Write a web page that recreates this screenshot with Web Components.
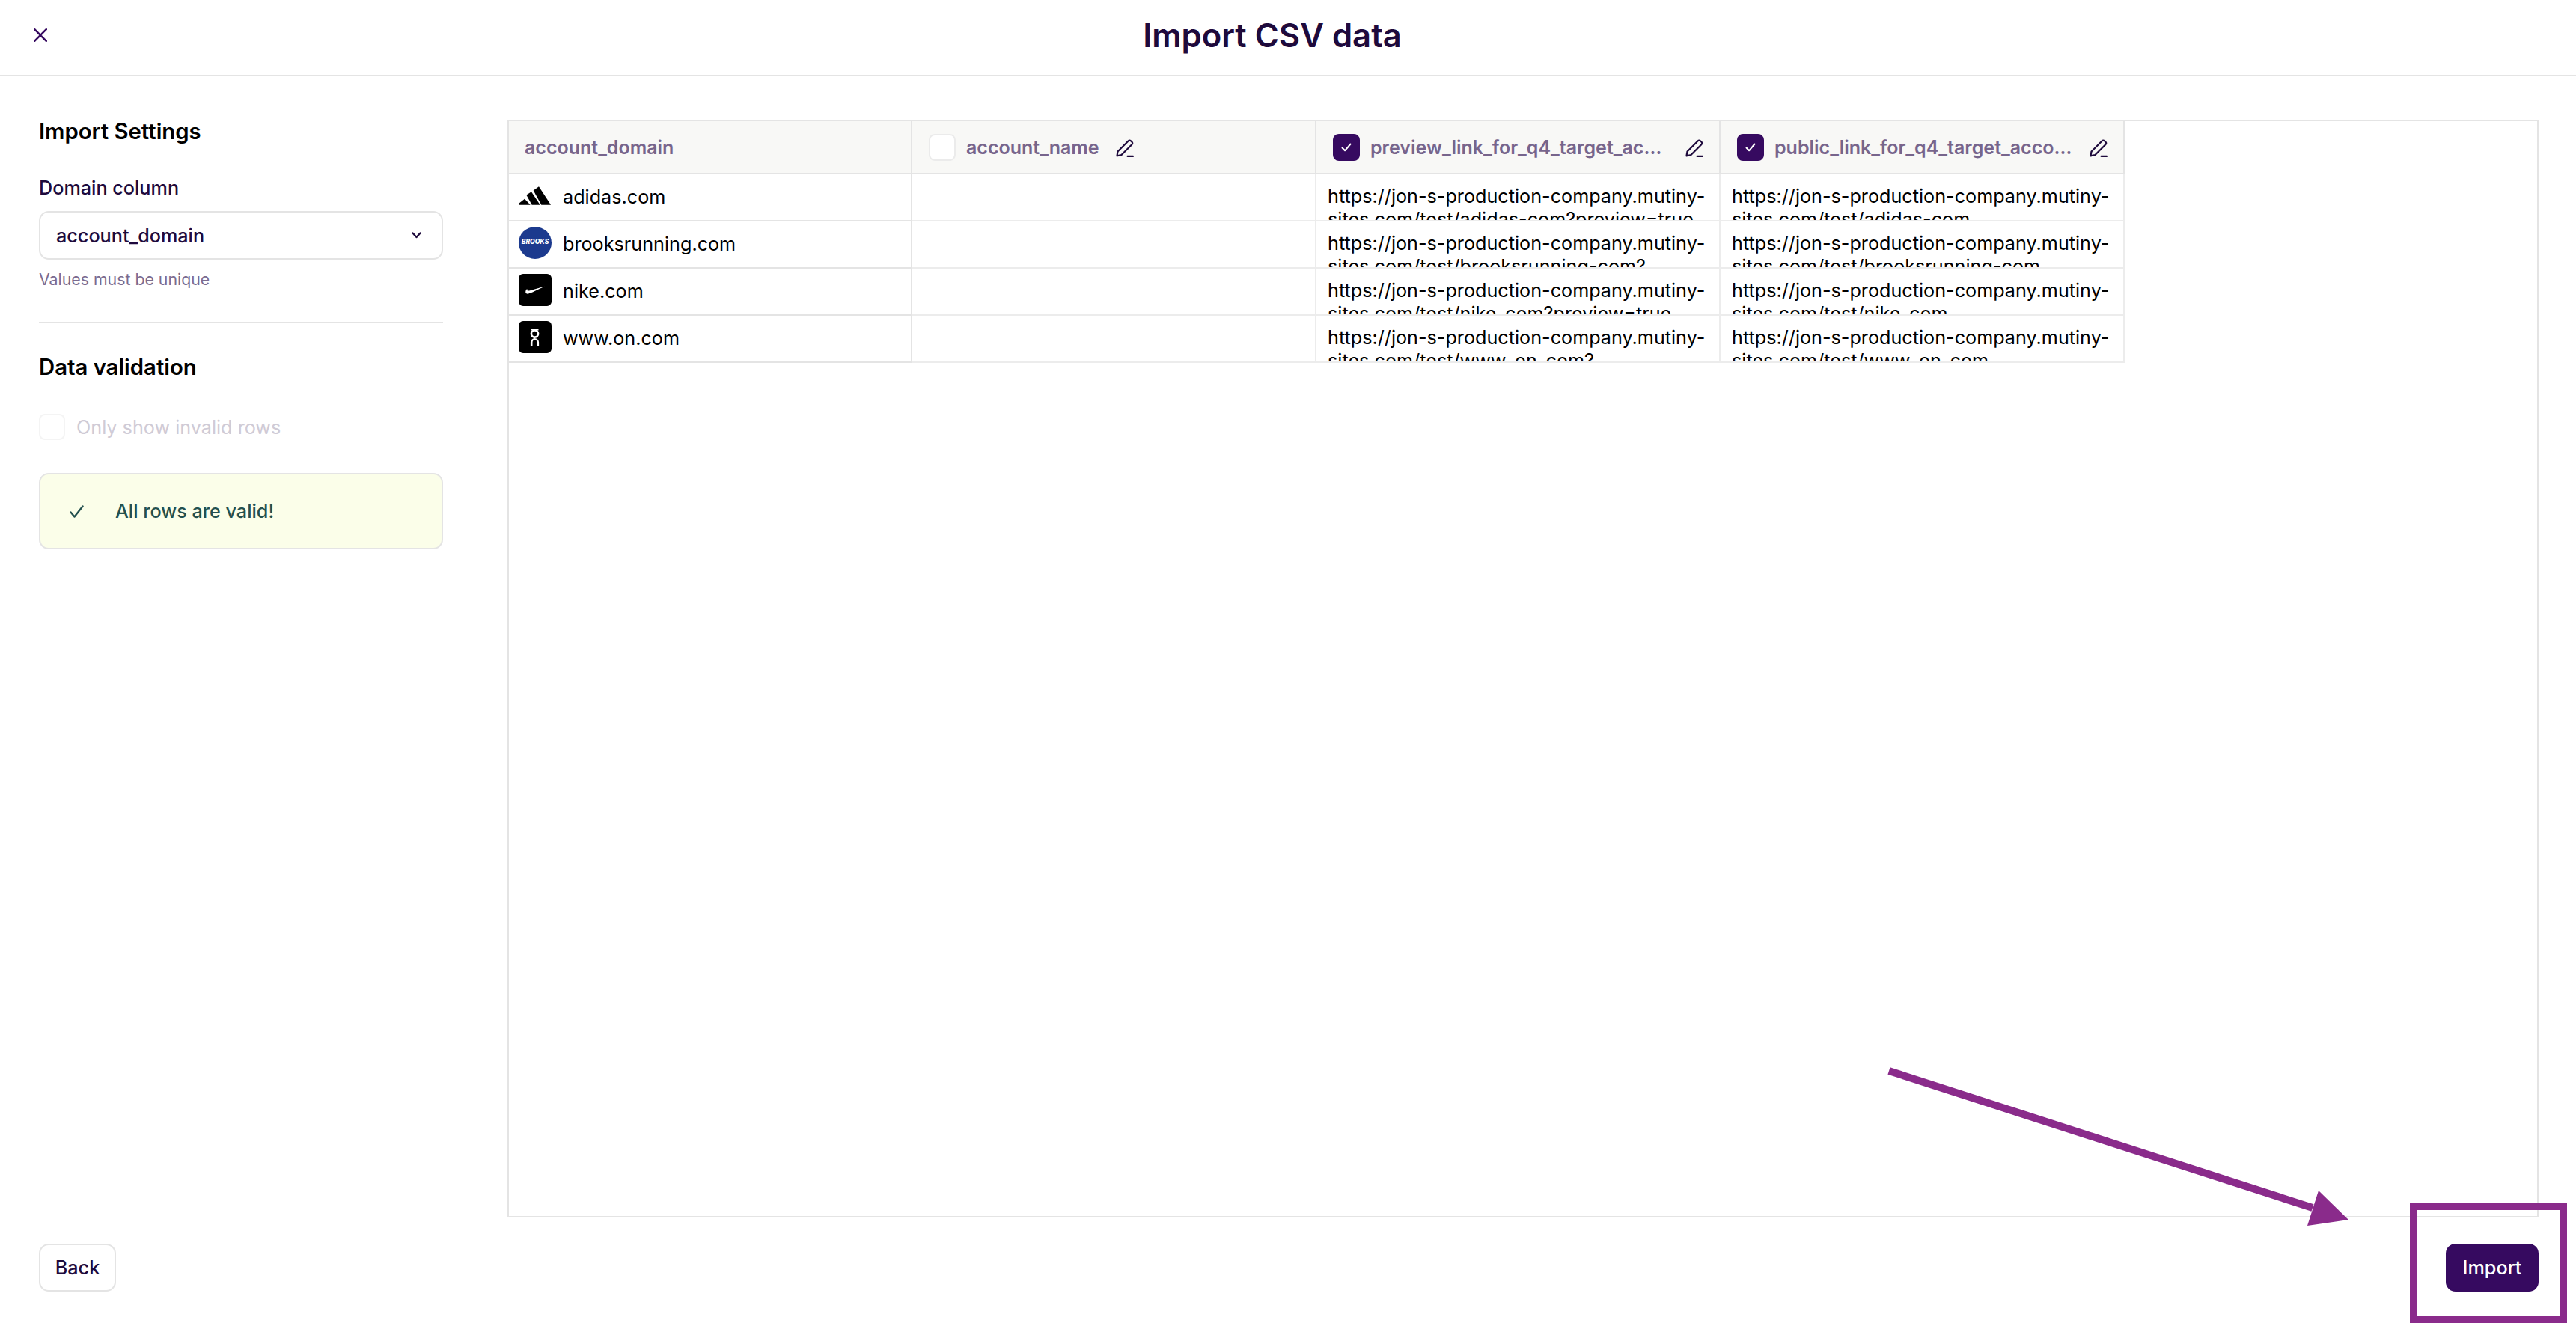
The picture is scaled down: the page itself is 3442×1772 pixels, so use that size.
<!DOCTYPE html>
<html lang="en">
<head>
<meta charset="utf-8">
<title>Import CSV data</title>
<style>
  html, body { margin: 0; padding: 0; background: #fff; }
  body { width: 3442px; height: 1772px; overflow: hidden; position: relative; font-family: Inter, "Liberation Sans", sans-serif; }
</style>
</head>
<body>
<import-page>
  <page-header slot="header">Import CSV data</page-header>

  <side-panel slot="side">
    <panel-title>Import Settings</panel-title>
    <domain-select label="Domain column" value="account_domain" hint="Values must be unique"></domain-select>
    <panel-divider></panel-divider>
    <panel-title>Data validation</panel-title>
    <disabled-check>Only show invalid rows</disabled-check>
    <valid-alert>All rows are valid!</valid-alert>
  </side-panel>

  <csv-table slot="table">
    <head-cell>account_domain</head-cell>
    <head-cell selectable editable narrow>account_name</head-cell>
    <head-cell selectable checked editable>preview_link_for_q4_target_accounts</head-cell>
    <head-cell selectable checked editable>public_link_for_q4_target_accounts</head-cell>

    <domain-cell logo="adidas">adidas.com</domain-cell>
    <link-cell></link-cell>
    <link-cell>https://jon-s-production-company.mutiny-sites.com/test/adidas-com?preview=true</link-cell>
    <link-cell>https://jon-s-production-company.mutiny-sites.com/test/adidas-com</link-cell>

    <domain-cell logo="brooks">brooksrunning.com</domain-cell>
    <link-cell></link-cell>
    <link-cell>https://jon-s-production-company.mutiny-sites.com/test/brooksrunning-com?preview=true</link-cell>
    <link-cell>https://jon-s-production-company.mutiny-sites.com/test/brooksrunning-com</link-cell>

    <domain-cell logo="nike">nike.com</domain-cell>
    <link-cell></link-cell>
    <link-cell>https://jon-s-production-company.mutiny-sites.com/test/nike-com?preview=true</link-cell>
    <link-cell>https://jon-s-production-company.mutiny-sites.com/test/nike-com</link-cell>

    <domain-cell logo="on">www.on.com</domain-cell>
    <link-cell></link-cell>
    <link-cell>https://jon-s-production-company.mutiny-sites.com/test/www-on-com?preview=true</link-cell>
    <link-cell>https://jon-s-production-company.mutiny-sites.com/test/www-on-com</link-cell>
  </csv-table>

  <action-button slot="back">Back</action-button>
  <action-button slot="import" primary>Import</action-button>
</import-page>
<arrow-callout></arrow-callout>

<script>
const INK = '#1e0a3c';
const BRAND = '#360a60';
const LINE = '#e4e4e4';
const TEXT_SIZE = '25.2px';

const PEN = `<svg width="24" height="24" viewBox="0 0 24 24" fill="none" stroke="${INK}" stroke-width="2.2" stroke-linejoin="round" stroke-linecap="round">
    <path d="M1.5 22.3l1-5.8L16.5 2.5c1-1 2.5-1 3.5-.2l1.5 1.4c1 1 1 2.3 0 3.3L7.5 21z"></path>
    <path d="M15.5 22.8h7.5"></path>
  </svg>`;

const TICK = `<svg width="14" height="12" viewBox="0 0 14 12" fill="none" stroke="#fff" stroke-width="2" stroke-linecap="round" stroke-linejoin="round"><path d="M1.5 6.5l3.6 3.8L12.5 1.5"></path></svg>`;

class ImportPage extends HTMLElement {
    connectedCallback() {
        this.attachShadow({ mode: 'open' });
        this.shadowRoot.innerHTML = `
            <style>
                :host { display: flex; flex-direction: column; width: 3442px; height: 1772px; background: #fff; }
                .body {
                    flex: 1;
                    min-height: 0;
                    display: grid;
                    grid-template-columns: 540px 1fr;
                    grid-template-rows: 1fr 64px;
                    column-gap: 86px;
                    row-gap: 35px;
                    padding: 58px 50px 46px 52px;
                }
                .end { display: flex; justify-content: flex-end; }
                .start { display: flex; }
            </style>
            <slot name="header"></slot>
            <div class="body">
                <slot name="side"></slot>
                <slot name="table"></slot>
                <div class="start"><slot name="back"></slot></div>
                <div class="end"><slot name="import"></slot></div>
            </div>
        `;
    }
}

class PageHeader extends HTMLElement {
    connectedCallback() {
        this.attachShadow({ mode: 'open' });
        this.shadowRoot.innerHTML = `
            <style>
                :host {
                    display: flex;
                    align-items: center;
                    justify-content: center;
                    position: relative;
                    height: 102px;
                    box-sizing: border-box;
                    padding: 0 42px 6px 0;
                    border-bottom: 2px solid ${LINE};
                    color: ${INK};
                    font-weight: 600;
                    font-size: 43.6px;
                }
                .close { position: absolute; left: 45px; top: 38px; width: 18px; height: 18px; }
            </style>
            <svg class="close" viewBox="0 0 18 18" fill="none" stroke="${BRAND}" stroke-width="2.5" stroke-linecap="round"><path d="M1.2 1.2l15.6 15.6M16.8 1.2L1.2 16.8"></path></svg>
            <span><slot></slot></span>
        `;
    }
}

class SidePanel extends HTMLElement {
    connectedCallback() {
        this.attachShadow({ mode: 'open' });
        this.shadowRoot.innerHTML = `
            <style>
                :host { display: flex; flex-direction: column; }
            </style>
            <slot></slot>
        `;
    }
}

class PanelTitle extends HTMLElement {
    connectedCallback() {
        this.attachShadow({ mode: 'open' });
        this.shadowRoot.innerHTML = `
            <style>
                :host { display: block; font-size: 29.3px; line-height: 32px; font-weight: 600; color: #000; }
            </style>
            <slot></slot>
        `;
    }
}

class DomainSelect extends HTMLElement {
    connectedCallback() {
        this.attachShadow({ mode: 'open' });
        this.shadowRoot.innerHTML = `
            <style>
                :host { display: block; padding-top: 43px; color: ${INK}; font-size: ${TEXT_SIZE}; }
                .label { line-height: 32px; font-weight: 500; }
                .box {
                    margin-top: 15px;
                    height: 65px;
                    box-sizing: border-box;
                    border: 2px solid ${LINE};
                    border-radius: 13px;
                    padding: 0 27px 0 21px;
                    display: flex;
                    align-items: center;
                    justify-content: space-between;
                    font-weight: 500;
                }
                .hint { margin-top: 13px; font-size: 21.3px; line-height: 26px; color: #7b6b8f; }
            </style>
            <div class="label">${this.getAttribute('label')}</div>
            <div class="box">
                <span>${this.getAttribute('value')}</span>
                <svg width="13" height="9" viewBox="0 0 13 9" fill="none" stroke="${INK}" stroke-width="2.4" stroke-linecap="round" stroke-linejoin="round"><path d="M1.5 1.5l5 5.5 5-5.5"></path></svg>
            </div>
            <div class="hint">${this.getAttribute('hint')}</div>
        `;
    }
}

class PanelDivider extends HTMLElement {
    connectedCallback() {
        this.attachShadow({ mode: 'open' });
        this.shadowRoot.innerHTML = `
            <style>
                :host { display: block; height: 2px; margin: 44px 0 43px; background: ${LINE}; }
            </style>
        `;
    }
}

class DisabledCheck extends HTMLElement {
    connectedCallback() {
        this.attachShadow({ mode: 'open' });
        this.shadowRoot.innerHTML = `
            <style>
                :host { display: flex; align-items: center; gap: 15px; margin-top: 46px; height: 35px; font-size: ${TEXT_SIZE}; color: #cfcbd6; }
                i { display: block; width: 35px; height: 35px; box-sizing: border-box; border: 2px solid #f4f4f4; border-radius: 8px; }
            </style>
            <i></i><span><slot></slot></span>
        `;
    }
}

class ValidAlert extends HTMLElement {
    connectedCallback() {
        this.attachShadow({ mode: 'open' });
        this.shadowRoot.innerHTML = `
            <style>
                :host {
                    display: flex;
                    align-items: center;
                    gap: 42px;
                    margin-top: 44px;
                    height: 102px;
                    box-sizing: border-box;
                    padding-left: 39px;
                    border: 2px solid ${LINE};
                    border-radius: 13px;
                    background: #fbfee9;
                    color: #23504f;
                    font-size: ${TEXT_SIZE};
                    font-weight: 500;
                }
            </style>
            <svg width="19" height="17" viewBox="0 0 19 17" fill="none" stroke="#23504f" stroke-width="2.4" stroke-linecap="round" stroke-linejoin="round"><path d="M1.5 9.5l5 6L17.5 1.5"></path></svg>
            <span><slot></slot></span>
        `;
    }
}

class CsvTable extends HTMLElement {
    connectedCallback() {
        this.attachShadow({ mode: 'open' });
        this.shadowRoot.innerHTML = `
            <style>
                :host { display: block; border: 2px solid ${LINE}; box-sizing: border-box; min-height: 0; overflow: hidden; }
                .grid { display: grid; grid-template-columns: 539px 540px 540px 540px; grid-auto-rows: 63px; grid-template-rows: 71px; justify-content: start; }
            </style>
            <div class="grid"><slot></slot></div>
        `;
    }
}

class HeadCell extends HTMLElement {
    connectedCallback() {
        const selectable = this.hasAttribute('selectable');
        const checked = this.hasAttribute('checked');
        const editable = this.hasAttribute('editable');
        this.attachShadow({ mode: 'open' });
        this.shadowRoot.innerHTML = `
            <style>
                :host {
                    display: flex;
                    align-items: center;
                    box-sizing: border-box;
                    min-width: 0;
                    padding: 0 21px 0 ${selectable ? 22 : 21}px;
                    gap: 14px;
                    background: #f8f8f6;
                    border-right: 2px solid ${LINE};
                    border-bottom: 2px solid ${LINE};
                    color: #77658c;
                    font-size: 25px;
                    font-weight: 600;
                }
                .box {
                    flex: none;
                    display: flex;
                    align-items: center;
                    justify-content: center;
                    width: 36px;
                    height: 36px;
                    box-sizing: border-box;
                    border-radius: 8px;
                    border: 2px solid #ebebeb;
                    background: #fff;
                }
                .box.on { background: ${BRAND}; border-color: ${BRAND}; }
                .name { flex: ${this.hasAttribute('narrow') ? '0 1 auto' : '1 1 0'}; min-width: 0; overflow: hidden; white-space: nowrap; text-overflow: ellipsis; }
                .pen { flex: none; display: flex; margin-left: 8px; margin-top: 3px; }
            </style>
            ${selectable ? `<span class="box ${checked ? 'on' : ''}">${checked ? TICK : ''}</span>` : ''}
            <span class="name"><slot></slot></span>
            ${editable ? `<span class="pen">${PEN}</span>` : ''}
        `;
    }
}

const LOGOS = {
    adidas: `<svg width="42" height="25" viewBox="72 72 126 74" fill="#000"><path d="M128 88l22-16 48 74h-38z"></path><path d="M100 106l20-13 35 53h-33z"></path><path d="M72 138l21-16 23 24H72z"></path></svg>`,
    brooks: `<span class="brooks">BROOKS</span>`,
    nike: `<svg class="tile" width="44" height="43" viewBox="0 0 44 43"><path fill="#fff" d="M9.5 22.6c-1 3 .5 4.5 3.5 3.9C16 26 27 20.6 34.5 16.8L15 22.3c-2.5.7-4.5.3-3.5-2.5-1 .8-1.6 1.8-2 2.8z"></path></svg>`,
    on: `<svg class="tile" width="44" height="43" viewBox="0 0 44 43" fill="none" stroke="#fff" stroke-width="2.6"><circle cx="21.5" cy="17" r="4.6"></circle><path d="M17 11.3h9.5"></path><path d="M17.2 33v-4.4a4.3 4.3 0 0 1 8.6 0V33"></path></svg>`
};

class DomainCell extends HTMLElement {
    connectedCallback() {
        this.attachShadow({ mode: 'open' });
        this.shadowRoot.innerHTML = `
            <style>
                :host {
                    display: flex;
                    align-items: flex-start;
                    box-sizing: border-box;
                    padding: 7px 0 0 13px;
                    gap: 15px;
                    border-right: 2px solid ${LINE};
                    border-bottom: 2px solid ${LINE};
                    color: #000;
                    font-size: ${TEXT_SIZE};
                    line-height: 43px;
                }
                .logo { flex: none; width: 44px; height: 43px; display: flex; align-items: center; justify-content: center; }
                .tile { display: block; background: #000; border-radius: 6px; }
                .text { padding-top: 2px; }
                .brooks {
                    width: 44px;
                    height: 43px;
                    border-radius: 50%;
                    background: #1c3a8e;
                    color: #fff;
                    font-size: 8.6px;
                    font-weight: 800;
                    font-style: italic;
                    line-height: 40px;
                    text-align: center;
                }
            </style>
            <span class="logo">${LOGOS[this.getAttribute('logo')]}</span>
            <span class="text"><slot></slot></span>
        `;
    }
}

class LinkCell extends HTMLElement {
    connectedCallback() {
        this.attachShadow({ mode: 'open' });
        this.shadowRoot.innerHTML = `
            <style>
                :host {
                    display: block;
                    box-sizing: border-box;
                    padding: 14px 16px 0 15px;
                    overflow: hidden;
                    border-right: 2px solid #ececec;
                    border-bottom: 2px solid #ececec;
                    color: #000;
                    font-size: ${TEXT_SIZE};
                    line-height: 30.73px;
                }
            </style>
            <slot></slot>
        `;
    }
}

class ActionButton extends HTMLElement {
    connectedCallback() {
        const primary = this.hasAttribute('primary');
        this.attachShadow({ mode: 'open' });
        this.shadowRoot.innerHTML = `
            <style>
                :host {
                    display: flex;
                    align-items: center;
                    justify-content: center;
                    height: 64px;
                    width: ${primary ? 124 : 103}px;
                    box-sizing: border-box;
                    border-radius: 13px;
                    border: 2px solid ${primary ? BRAND : LINE};
                    background: ${primary ? BRAND : '#fff'};
                    color: ${primary ? '#fff' : INK};
                    font-size: ${TEXT_SIZE};
                    font-weight: 500;
                }
            </style>
            <slot></slot>
        `;
    }
}

// purple annotation painted on top of the screenshot
class ArrowCallout extends HTMLElement {
    connectedCallback() {
        this.attachShadow({ mode: 'open' });
        this.shadowRoot.innerHTML = `
            <style>
                :host { position: absolute; left: 0; top: 0; width: 3442px; height: 1772px; pointer-events: none; }
                svg { display: block; }
            </style>
            <svg width="3442" height="1772" viewBox="0 0 3442 1772" fill="none">
                <path d="M2524 1431L3090 1614" stroke="#8a2b8b" stroke-width="10"></path>
                <path d="M3138 1630L3098 1591L3083 1638Z" fill="#8a2b8b"></path>
                <rect x="3225" y="1612" width="200" height="151" stroke="#8a2b8b" stroke-width="10"></rect>
            </svg>
        `;
    }
}

customElements.define('import-page', ImportPage);
customElements.define('page-header', PageHeader);
customElements.define('side-panel', SidePanel);
customElements.define('panel-title', PanelTitle);
customElements.define('domain-select', DomainSelect);
customElements.define('panel-divider', PanelDivider);
customElements.define('disabled-check', DisabledCheck);
customElements.define('valid-alert', ValidAlert);
customElements.define('csv-table', CsvTable);
customElements.define('head-cell', HeadCell);
customElements.define('domain-cell', DomainCell);
customElements.define('link-cell', LinkCell);
customElements.define('action-button', ActionButton);
customElements.define('arrow-callout', ArrowCallout);
</script>
</body>
</html>
